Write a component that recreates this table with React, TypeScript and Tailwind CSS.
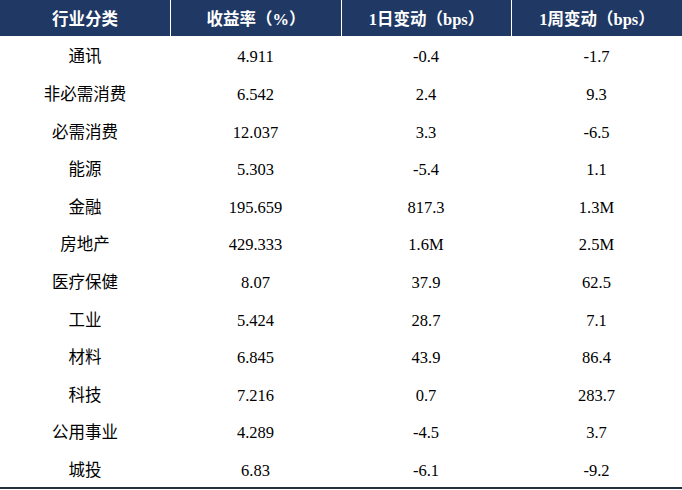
const rows: [string, string, string, string][] = [
  ["通讯", "4.911", "-0.4", "-1.7"],
  ["非必需消费", "6.542", "2.4", "9.3"],
  ["必需消费", "12.037", "3.3", "-6.5"],
  ["能源", "5.303", "-5.4", "1.1"],
  ["金融", "195.659", "817.3", "1.3M"],
  ["房地产", "429.333", "1.6M", "2.5M"],
  ["医疗保健", "8.07", "37.9", "62.5"],
  ["工业", "5.424", "28.7", "7.1"],
  ["材料", "6.845", "43.9", "86.4"],
  ["科技", "7.216", "0.7", "283.7"],
  ["公用事业", "4.289", "-4.5", "3.7"],
  ["城投", "6.83", "-6.1", "-9.2"],
]

const headers = ["行业分类", "收益率（%）", "1日变动（bps）", "1周变动（bps）"]

export default function App() {
  return (
    <div
      className="w-[682px] h-[490px] bg-white text-black"
      style={{ fontFamily: '"Liberation Serif", "Noto Sans CJK SC", serif' }}
    >
      <div className="grid grid-cols-[170px_171px_170px_171px] h-[36px] bg-[#203864] text-white font-bold text-[16.5px]">
        {headers.map((h, i) => (
          <div
            key={h}
            className={`flex items-center justify-center pt-[4px] ${i > 0 ? "border-l border-white" : ""}`}
          >
            {h}
          </div>
        ))}
      </div>
      <div className="border-b-2 border-[#23313f]">
        {rows.map((r) => (
          <div key={r[0]} className="grid grid-cols-[170px_171px_170px_171px] h-[37.6px] text-[16.5px]">
            {r.map((c, i) => (
              <div key={i} className="flex items-center justify-center pt-[6px]">
                {c}
              </div>
            ))}
          </div>
        ))}
      </div>
    </div>
  )
}
